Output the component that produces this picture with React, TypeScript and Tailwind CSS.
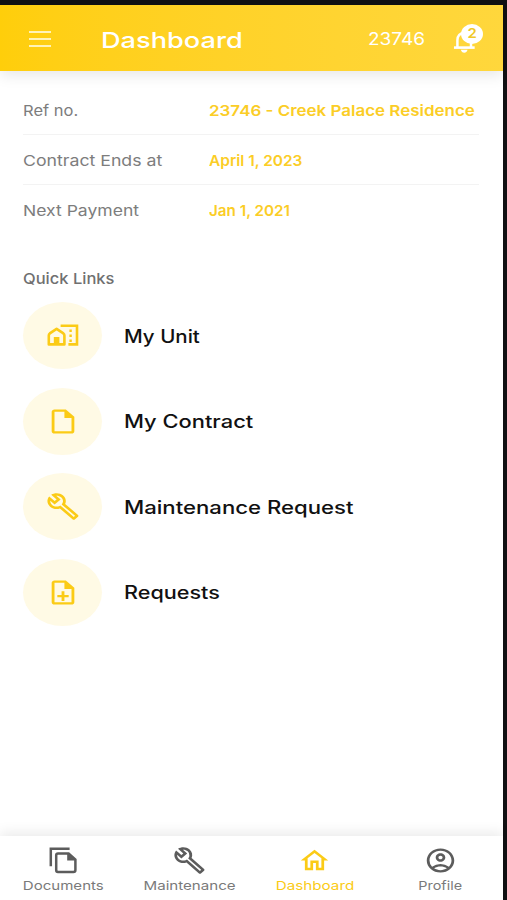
import React from 'react';
import type { SVGProps } from 'react';
import {
  MdOutlineAccountCircle,
  MdOutlineBuild,
  MdOutlineHome,
  MdOutlineInsertDriveFile,
  MdOutlineNoteAdd,
} from 'react-icons/md';

type Icon = React.ComponentType<SVGProps<SVGSVGElement>>;

interface DetailRow {
  label: string;
  value: string;
  labelClass: string;
  valueClass: string;
}

interface LinkItem {
  label: string;
  icon: Icon;
  textClass: string;
}

interface NavItem extends LinkItem {
  active?: boolean;
}

/**
 * House in front of an apartment block
 */
const UnitIcon: Icon = (props) => (
  <svg viewBox="0 0 34 29" fill="none" stroke="currentColor" strokeWidth="2.6" {...props}>
    <path d="M2.8 23.4V14.4Q2.8 13.2 3.8 12.4L10.6 7.8L17.4 12.4Q18.4 13.2 18.4 14.4V23.4Z" strokeLinejoin="round" />
    <path d="M7.8 24V16H13.4V24Z" fill="currentColor" stroke="none" />
    <path d="M14.6 4.7H31V23.4H22.4" />
    <path d="M24.6 8.4V21.4" strokeWidth="2.4" strokeDasharray="2.6 2.4" />
  </svg>
);

/**
 * Two stacked sheets, the front one with a folded corner
 */
const DocumentsIcon: Icon = (props) => (
  <svg viewBox="0 0 33 29" fill="none" stroke="currentColor" strokeWidth="2.5" {...props}>
    <path d="M3.8 20.2V2.7H22.6" />
    <path d="M11 7.4H21.6L28.4 13.6V24Q28.4 26 26.4 26H11Q9.2 26 9.2 24V9.2Q9.2 7.4 11 7.4Z" />
    <path d="M20.2 7V14.4H28.6L22 7Z" fill="currentColor" stroke="none" />
  </svg>
);

const BellIcon: Icon = (props) => (
  <svg viewBox="0 0 24 24" fill="none" stroke="currentColor" strokeWidth="2.6" {...props}>
    <path d="M4.6 18V11.2C4.6 6.8 7.4 4 11.6 4S18.8 6.8 18.8 11.2V18" />
    <path d="M1 18.6H22.6" />
    <path d="M8.2 20.8H15.2Q14.4 23.8 11.7 23.8T8.2 20.8Z" fill="currentColor" stroke="none" />
  </svg>
);

const details: DetailRow[] = [
  { label: 'Ref no.', value: '23746 - Creek Palace Residence', labelClass: 'scale-x-[1.1]', valueClass: 'scale-x-[1.13]' },
  { label: 'Contract Ends at', value: 'April 1, 2023', labelClass: 'scale-x-[1.18]', valueClass: 'scale-x-[1.03]' },
  { label: 'Next Payment', value: 'Jan 1, 2021', labelClass: 'scale-x-[1.17]', valueClass: 'scale-x-[1.015]' },
];

const quickLinks: LinkItem[] = [
  { label: 'My Unit', icon: UnitIcon, textClass: 'scale-x-[1.14]' },
  { label: 'My Contract', icon: MdOutlineInsertDriveFile, textClass: 'scale-x-[1.215]' },
  { label: 'Maintenance Request', icon: MdOutlineBuild, textClass: 'scale-x-[1.23]' },
  { label: 'Requests', icon: MdOutlineNoteAdd, textClass: 'scale-x-[1.2]' },
];

const navItems: NavItem[] = [
  { label: 'Documents', icon: DocumentsIcon, textClass: 'scale-x-[1.255]' },
  { label: 'Maintenance', icon: MdOutlineBuild, textClass: 'scale-x-[1.26]' },
  { label: 'Dashboard', icon: MdOutlineHome, textClass: 'scale-x-[1.27]', active: true },
  { label: 'Profile', icon: MdOutlineAccountCircle, textClass: 'scale-x-[1.2]' },
];

const Header: React.FC = () => (
  <header className="relative flex h-[66px] shrink-0 items-center bg-linear-to-r from-[#ffce0a] to-[#ffd73c] pt-[2px] pl-[29px] text-white shadow-[0_4px_14px_rgba(0,0,0,0.1)]">
    <button type="button" aria-label="Menu" className="flex w-[22px] flex-col gap-[5px]">
      <span className="h-[2px] w-full bg-[#fff3b8]" />
      <span className="h-[2px] w-full bg-[#fff3b8]" />
      <span className="h-[2px] w-full bg-[#fff3b8]" />
    </button>
    <h1 className="ml-[50px] w-[267px] pt-[2px] text-[22px] font-medium">
      <span className="inline-block origin-left scale-x-[1.235]">Dashboard</span>
    </h1>
    <span className="w-[85px] pt-[1px] text-[17px]">
      <span className="inline-block origin-left scale-x-[1.12]">23746</span>
    </span>
    <button type="button" aria-label="Notifications" className="relative mt-[3px]">
      <BellIcon preserveAspectRatio="none" className="h-[24px] w-[23px]" />
      <span className="absolute -top-[5px] left-[8px] flex h-[20px] w-[22px] items-center justify-center rounded-[50%] bg-white text-[13px] font-semibold text-[#f0c829]">
        <span className="inline-block scale-x-[1.15]">2</span>
      </span>
    </button>
  </header>
);

const QuickLink: React.FC<LinkItem> = ({ label, icon: Icon, textClass }) => (
  <li className="flex items-center gap-[22px]">
    <span className="flex h-[67px] w-[79px] items-center justify-center rounded-[50%] bg-[#fffae5]">
      <Icon preserveAspectRatio="none" className="h-[29px] w-[34px] text-[#fbcb16]" />
    </span>
    <span className={`inline-block origin-left pt-[1px] text-[18px] font-medium text-[#111] ${textClass}`}>{label}</span>
  </li>
);

const BottomNav: React.FC = () => (
  <nav className="flex h-[64px] shrink-0 bg-white shadow-[0_-4px_12px_rgba(0,0,0,0.08)]">
    {navItems.map(({ label, icon: Icon, textClass, active }) => (
      <a
        key={label}
        className={`flex flex-1 flex-col items-center pt-[10px] ${active ? 'text-[#fbcb16]' : 'text-[#7a7a7a]'}`}
      >
        <Icon
          preserveAspectRatio="none"
          className={`ml-[1px] h-[29px] w-[33px] ${active ? 'text-[#fbcb16]' : 'text-[#5c5c5c]'}`}
        />
        <span className={`mt-[2px] ml-[1px] inline-block text-[12px] leading-[18px] whitespace-nowrap ${textClass}`}>{label}</span>
      </a>
    ))}
  </nav>
);

export default function App() {
  return (
    <div className="h-[900px] w-[507px] overflow-hidden bg-[#111113] pt-[5px] pr-[4px] font-['Inter',sans-serif]">
      <div className="flex h-full flex-col bg-white">
        <Header />
        <main className="flex-1 pt-[14px] pr-[24px] pl-[23px]">
          <dl>
            {details.map((row) => (
              <div key={row.label} className="flex h-[50px] items-center border-b border-[#f3f3f3] pt-[3px] text-[15px] last:border-b-0">
                <dt className="w-[186px] shrink-0 text-[#7d7d7d]">
                  <span className={`inline-block origin-left ${row.labelClass}`}>{row.label}</span>
                </dt>
                <dd className="font-semibold whitespace-nowrap text-[#fbcd26]">
                  <span className={`inline-block origin-left ${row.valueClass}`}>{row.value}</span>
                </dd>
              </div>
            ))}
          </dl>
          <h2 className="mt-[32px] text-[15px] leading-[24px] font-medium text-[#707070]">
            <span className="inline-block origin-left scale-x-[1.1]">Quick Links</span>
          </h2>
          <ul className="mt-[11px] flex flex-col gap-[18.5px]">
            {quickLinks.map((link) => (
              <QuickLink key={link.label} {...link} />
            ))}
          </ul>
        </main>
        <BottomNav />
      </div>
    </div>
  );
}
